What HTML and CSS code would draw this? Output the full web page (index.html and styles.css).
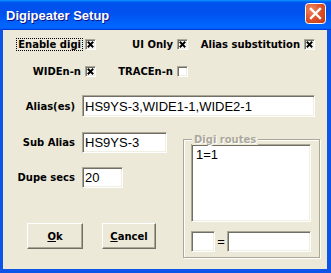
FILE: index.html
```html
<!DOCTYPE html>
<html lang="en">
<head>
    <meta charset="UTF-8">
    <meta name="viewport" content="width=device-width, initial-scale=1.0">
    <title>Digipeater Setup</title>
    <link rel="stylesheet" href="styles.css">
</head>
<body>
    <div class="window">
        <div class="title-bar">
            <span class="title">Digipeater Setup</span>
            <button class="close" aria-label="Close">
                <svg width="21" height="21" viewBox="0 0 21 21">
                    <defs>
                        <radialGradient id="closeFill" cx="30%" cy="30%" r="80%">
                            <stop offset="0" stop-color="#f08a65"/>
                            <stop offset="0.55" stop-color="#e1542a"/>
                            <stop offset="1" stop-color="#c8401b"/>
                        </radialGradient>
                    </defs>
                    <rect x="0.5" y="0.5" width="20" height="20" rx="3" fill="url(#closeFill)" stroke="#fff"/>
                    <path d="M6 6L15 15M15 6L6 15" stroke="#fff" stroke-width="2.4" stroke-linecap="square"/>
                </svg>
            </button>
        </div>

        <div class="dialog">
            <div class="checks">
                <label class="chk"><span class="cap focus">Enable digi</span><span class="box"><svg viewBox="0 0 7 7"><path d="M0.8 0.8L6.2 6.2M6.2 0.8L0.8 6.2"/></svg></span></label>
                <label class="chk"><span class="cap">UI Only</span><span class="box"><svg viewBox="0 0 7 7"><path d="M0.8 0.8L6.2 6.2M6.2 0.8L0.8 6.2"/></svg></span></label>
                <label class="chk"><span class="cap">Alias substitution</span><span class="box"><svg viewBox="0 0 7 7"><path d="M0.8 0.8L6.2 6.2M6.2 0.8L0.8 6.2"/></svg></span></label>
                <label class="chk"><span class="cap">WIDEn-n</span><span class="box"><svg viewBox="0 0 7 7"><path d="M0.8 0.8L6.2 6.2M6.2 0.8L0.8 6.2"/></svg></span></label>
                <label class="chk"><span class="cap">TRACEn-n</span><span class="box"></span></label>
            </div>

            <div class="field alias-row">
                <label for="aliases">Alias(es)</label>
                <input type="text" id="aliases" class="edit alias-edit" value="HS9YS-3,WIDE1-1,WIDE2-1">
            </div>

            <div class="lower">
                <div class="left-col">
                    <div class="field">
                        <label for="subAlias">Sub Alias</label>
                        <input type="text" id="subAlias" class="edit sub-edit" value="HS9YS-3">
                    </div>
                    <div class="field dupe-row">
                        <label for="dupeSecs">Dupe secs</label>
                        <input type="text" id="dupeSecs" class="edit dupe-edit" value="20">
                    </div>
                    <div class="buttons">
                        <button class="btn ok-btn"><u>O</u>k</button>
                        <button class="btn cancel-btn"><u>C</u>ancel</button>
                    </div>
                </div>

                <div class="routes">
                    <span class="legend">Digi routes</span>
                    <div class="listbox">1=1</div>
                    <div class="route-edit">
                        <input type="text" class="edit route-from">
                        <span class="eq">=</span>
                        <input type="text" class="edit route-to">
                    </div>
                </div>
            </div>
        </div>
    </div>
</body>
</html>
```

FILE: styles.css
```css
html, body {
    margin: 0;
    padding: 0;
    background: #0d55e9;
}

.window {
    width: 331px;
    height: 273px;
    display: flex;
    flex-direction: column;
}

.title-bar {
    height: 30px;
    flex: none;
    display: flex;
    align-items: center;
    justify-content: space-between;
    padding: 0 5px 0 6px;
    background: linear-gradient(180deg, #0997ff, #0053ee 8%, #0050ee 40%, #0066ff 88%, #0066ff 93%, #005bff 95%, #003dd7 96%, #003dd7);
}

.title {
    font: bold 13px "Liberation Sans", Arial, sans-serif;
    color: #fff;
    text-shadow: 1px 1px #0f1089;
}

.close {
    width: 21px;
    height: 21px;
    margin-top: -3px;
    padding: 0;
    border: none;
    background: none;
    display: block;
}

.close svg {
    display: block;
}

.dialog {
    flex: 1;
    background: #ece9d8;
    border-left: 3px solid #0d55e9;
    border-right: 4px solid #0d55e9;
    border-bottom: 4px solid #0d55e9;
    font: bold 10px "DejaVu Sans", sans-serif;
    color: #000;
}

/* checkbox rows */
.checks {
    display: grid;
    grid-template-columns: 93px 92px 127px;
    grid-auto-rows: 13px;
    row-gap: 14px;
    margin-top: 8px;
}

.chk {
    display: flex;
    justify-content: flex-end;
    align-items: center;
    gap: 2px;
}

.cap {
    border: 1px dotted transparent;
    padding: 0 1px;
    line-height: 11px;
}

.cap.focus {
    border-color: #000;
}

.box {
    width: 11px;
    height: 11px;
    box-sizing: border-box;
    background: #fff;
    border: 1px solid;
    border-color: #aca899 #fff #fff #aca899;
    box-shadow: inset 1px 1px #716f64, inset -1px -1px #f1efe2;
    display: flex;
    align-items: center;
    justify-content: center;
}

.box svg {
    width: 7px;
    height: 7px;
    display: block;
}

.box path {
    stroke: #000;
    stroke-width: 2;
    fill: none;
}

/* label + edit rows */
.field {
    display: grid;
    grid-template-columns: 72px auto;
    column-gap: 7px;
    align-items: center;
    justify-content: start;
}

.field label {
    text-align: right;
}

.edit {
    box-sizing: border-box;
    height: 21px;
    margin: 0;
    padding: 0 2px;
    font: 13px "Liberation Sans", Arial, sans-serif;
    color: #000;
    background: #fff;
    border: 1px solid;
    border-color: #aca899 #fff #fff #aca899;
    box-shadow: inset 1px 1px #716f64, inset -1px -1px #f1efe2;
    outline: none;
}

.alias-row {
    margin-top: 17px;
}

.alias-edit {
    width: 233px;
    height: 22px;
}

.lower {
    display: flex;
    align-items: flex-start;
    margin-top: 15px;
}

.left-col {
    width: 180px;
}

.sub-edit {
    width: 85px;
}

.dupe-row {
    margin-top: 14px;
}

.dupe-edit {
    width: 41px;
}

.buttons {
    display: flex;
    gap: 19px;
    margin-top: 35px;
    padding-left: 24px;
}

.btn {
    height: 26px;
    padding: 0;
    font: bold 10px "DejaVu Sans", sans-serif;
    color: #000;
    background: #ece9d8;
    border: 1px solid;
    border-color: #fff #716f64 #716f64 #fff;
    box-shadow: inset -1px -1px #aca899;
}

.ok-btn {
    width: 56px;
}

.cancel-btn {
    width: 54px;
}

/* Digi routes group */
.routes {
    position: relative;
    width: 137px;
    height: 119px;
    box-sizing: border-box;
    margin-top: 7px;
    padding: 4px 7px 0;
    border: 1px solid #aca899;
    box-shadow: 1px 1px 0 #fff, inset 1px 1px 0 #fff;
}

.legend {
    position: absolute;
    top: -6px;
    left: 8px;
    padding: 0 2px;
    line-height: 11px;
    background: #ece9d8;
    color: #aca899;
    text-shadow: 1px 1px #fff;
}

.listbox {
    box-sizing: border-box;
    width: 120px;
    height: 78px;
    padding: 2px 4px;
    font: 13px "Liberation Sans", Arial, sans-serif;
    background: #fff;
    border: 1px solid;
    border-color: #aca899 #fff #fff #aca899;
    box-shadow: inset 1px 1px #716f64, inset -1px -1px #f1efe2;
}

.route-edit {
    display: flex;
    align-items: center;
    justify-content: space-between;
    width: 120px;
    margin-top: 9px;
}

.route-from {
    width: 24px;
}

.route-to {
    width: 84px;
}

.eq {
    font: 13px "Liberation Sans", Arial, sans-serif;
}
```
